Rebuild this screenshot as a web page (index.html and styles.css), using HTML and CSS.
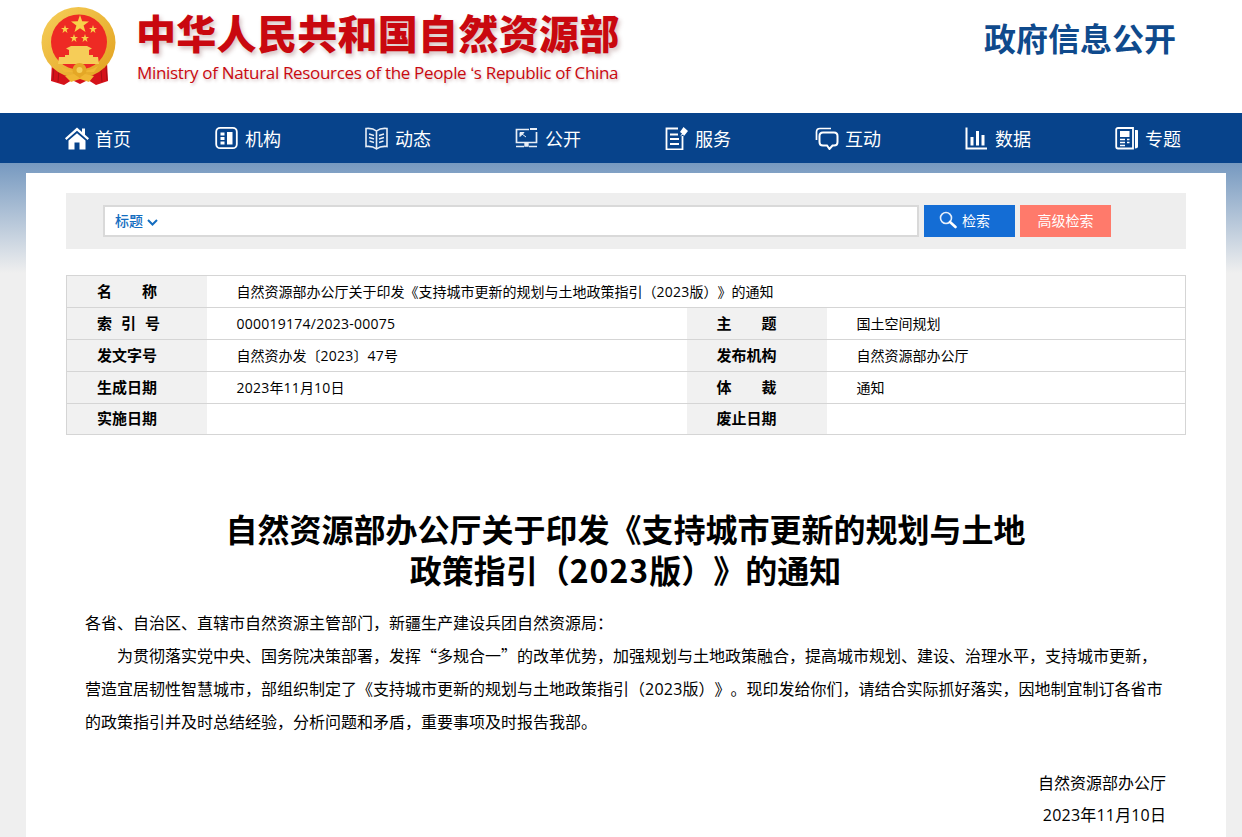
FILE: index.html
```html
<!DOCTYPE html>
<html lang="zh-CN">
<head>
<meta charset="UTF-8" />
<title>自然资源部办公厅关于印发《支持城市更新的规划与土地政策指引（2023版）》的通知</title>
<link rel="stylesheet" href="styles.css">
</head>
<body>
<header class="top">
  <div class="logo">
    <svg class="emblem" width="80" height="90" viewBox="0 0 80 90">
      <defs>
        <linearGradient id="gold" x1="0" y1="0" x2="1" y2="1">
          <stop offset="0" stop-color="#f6cf5a"/>
          <stop offset="1" stop-color="#e2a11e"/>
        </linearGradient>
      </defs>
      <path d="M12 58 L11 77 L24 81 L32 76 L40 80 L48 76 L56 81 L68 77 L67 58 Z" fill="#d5121a"/>
      <path d="M14 62 L13 76 M19 66 L18 78 M61 66 L62 78 M66 62 L67 76" stroke="#a80f14" stroke-width="1"/>
      <ellipse cx="38.5" cy="38.5" rx="37" ry="35.5" fill="url(#gold)"/>
      <ellipse cx="39" cy="38" rx="28" ry="27.5" fill="#ee2a24"/>
      <polygon points="40,11 42.2,17.3 49,17.5 43.6,21.6 45.5,28 40,24.3 34.5,28 36.4,21.6 31,17.5 37.8,17.3" fill="#f8d24a"/>
      <polygon points="25,21 26,24 29,24 26.6,25.8 27.5,29 25,27 22.5,29 23.4,25.8 21,24 24,24" fill="#f8d24a"/>
      <polygon points="53,21 54,24 57,24 54.6,25.8 55.5,29 53,27 50.5,29 51.4,25.8 49,24 52,24" fill="#f8d24a"/>
      <polygon points="34,30 35,33 38,33 35.6,34.8 36.5,38 34,36 31.5,38 32.4,34.8 30,33 33,33" fill="#f8d24a"/>
      <polygon points="45,30 46,33 49,33 46.6,34.8 47.5,38 45,36 42.5,38 43.4,34.8 41,33 44,33" fill="#f8d24a"/>
      <path d="M26 44.5 L31 42 L47 42 L52 44.5 L49 46 L49 51 L53 51 L53 53 L58 53 L59 60 L18 60 L19 53 L25 53 L25 51 L29 51 L29 46 Z" fill="#f6cd58"/>
      <path d="M20 62 C26 66 32 67 39 67 C46 67 52 66 58 62 L54 68 L24 68 Z" fill="#f0b734"/>
      <circle cx="39.5" cy="66" r="7" fill="#e4a726"/>
      <circle cx="39.5" cy="66" r="3" fill="#f6cf5a"/>
      <path d="M25 72 L34 70 L39.5 74 L45 70 L54 72 L49 78 L40 75 L31 78 Z" fill="#f0b734"/>
    </svg>
    <div class="logo-text">
      <div class="logo-cn">中华人民共和国自然资源部</div>
      <div class="logo-en">Ministry of Natural Resources of the People ʻs Republic of China</div>
    </div>
  </div>
  <div class="top-title">政府信息公开</div>
</header>

<nav class="nav">
  <a class="nav-item">
    <svg width="24" height="24" viewBox="0 0 24 24"><path d="M12 1.5 L17 6 V2.5 H20 V8.7 L24 12.3 L22.6 14 L12 4.8 L1.4 14 L0 12.3 Z" fill="#fff"/><path d="M3.5 14.5 L12 7.2 L20.5 14.5 V23.5 H14.5 V16.5 H9.5 V23.5 H3.5 Z" fill="#fff"/></svg>
    首页
  </a>
  <a class="nav-item">
    <svg width="24" height="24" viewBox="0 0 24 24"><rect x="1.2" y="1.8" width="20.6" height="20.4" rx="4" fill="none" stroke="#fff" stroke-width="1.8"/><path d="M5.5 6.5 H9.5 V9.5 H5.5 Z M5.5 11 H9.5 V14 H5.5 Z M5.5 15.5 H9.5 V18.5 H5.5 Z M12 6 H17.5 V18.5 H12 Z" fill="#fff"/></svg>
    机构
  </a>
  <a class="nav-item">
    <svg width="24" height="24" viewBox="0 0 24 24"><path d="M11.5 5 C9 3 5 2 1 2.5 V20.5 C5 20 9 21 11.5 23 C14 21 18 20 22 20.5 V2.5 C18 2 14 3 11.5 5 Z M11.5 5 V23" fill="none" stroke="#e8eef6" stroke-width="1.6"/><path d="M4 8 L9 9.5 M4 11.5 L9 13 M4.5 15 L9 16.5 M19 8 L14 9.5 M19 11.5 L14 13 M18.5 15 L14 16.5" stroke="#e8eef6" stroke-width="1.4"/></svg>
    动态
  </a>
  <a class="nav-item">
    <svg width="24" height="24" viewBox="0 0 24 24"><path d="M14 3.5 H1.5 V16.5 H21.5 V6" fill="none" stroke="#e8eef6" stroke-width="1.7"/><path d="M15 2 H22 V4 H15 Z" fill="#e8eef6"/><path d="M5 6.5 H9 L5 10.5 Z M7 8 L11 11" fill="#e8eef6" stroke="#e8eef6" stroke-width="1"/><path d="M10 17 H13 V20 H10 Z M1 20.5 H9 M14 20.5 H22" fill="#e8eef6" stroke="#e8eef6" stroke-width="1.4"/></svg>
    公开
  </a>
  <a class="nav-item">
    <svg width="24" height="24" viewBox="0 0 24 24"><path d="M13 2.5 H1.5 V23.5 H17.5 V10" fill="none" stroke="#fff" stroke-width="1.8"/><path d="M5 8.5 H13 M5 13 H14 M5 18 H14" stroke="#fff" stroke-width="1.8"/><path d="M18.5 1 L23 5 L19 10 L18 8.5 L15 10.5 L17 7.5 L15 6 Z" fill="#fff"/></svg>
    服务
  </a>
  <a class="nav-item">
    <svg width="24" height="24" viewBox="0 0 24 24"><path d="M1.5 14 V6 C1.5 4 3 2.5 5 2.5 H16" fill="none" stroke="#fff" stroke-width="1.7"/><path d="M8 6.5 H19 C21 6.5 22.5 8 22.5 10 V16 C22.5 18 21 19.5 19 19.5 H17.5 L14.5 23 L12 19.5 H8 C6 19.5 4.5 18 4.5 16 V10 C4.5 8 6 6.5 8 6.5 Z" fill="none" stroke="#fff" stroke-width="2"/></svg>
    互动
  </a>
  <a class="nav-item">
    <svg width="24" height="24" viewBox="0 0 24 24"><path d="M1.5 1.5 V22.5 H22" fill="none" stroke="#fff" stroke-width="2"/><path d="M5.5 11 H8.5 V19.5 H5.5 Z M11 5 H14 V19.5 H11 Z M16.5 9 H19.5 V19.5 H16.5 Z" fill="#fff"/></svg>
    数据
  </a>
  <a class="nav-item">
    <svg width="24" height="24" viewBox="0 0 24 24"><path d="M3 2 H18 V22.5 H3 C1.8 22.5 1.2 21.8 1.2 20.5 V3.5 C1.2 2.6 1.9 2 3 2 Z" fill="none" stroke="#fff" stroke-width="1.8"/><path d="M20 4 H22 C22.6 4 23 4.4 23 5 V20.5 C23 21.8 22 22.5 20 22.5 Z" fill="#fff"/><path d="M5 5 H14.5 V11 H5 Z" fill="#fff"/><path d="M5 13.5 H10 M12 13.5 H14.5 M5 16.5 H10 M12 16.5 H14.5 M5 19.5 H10" stroke="#fff" stroke-width="1.5"/></svg>
    专题
  </a>
</nav>

<main class="page">
  <form class="search">
    <div class="search-input">
      <span class="search-type">标题 <svg width="11" height="7" viewBox="0 0 11 7"><path d="M1 1 L5.5 5.5 L10 1" fill="none" stroke="#146dc0" stroke-width="2"/></svg></span>
    </div>
    <button type="button" class="btn btn-search">
      <svg width="18" height="18" viewBox="0 0 18 18"><circle cx="7" cy="7" r="5.5" fill="none" stroke="#e6effa" stroke-width="1.6"/><path d="M11 11 L16.5 16" stroke="#fff" stroke-width="2.6" stroke-linecap="round"/></svg>
      检索
    </button>
    <button type="button" class="btn btn-adv">高级检索</button>
  </form>

  <table class="info">
    <colgroup>
      <col class="col-label"><col class="col-value"><col class="col-label"><col>
    </colgroup>
    <tr>
      <th>名　　称</th>
      <td colspan="3">自然资源部办公厅关于印发《支持城市更新的规划与土地政策指引（<span class="num">2023</span>版）》的通知</td>
    </tr>
    <tr>
      <th>索 引 号</th>
      <td><span class="num">000019174/2023-00075</span></td>
      <th>主　　题</th>
      <td>国土空间规划</td>
    </tr>
    <tr>
      <th>发文字号</th>
      <td>自然资办发〔<span class="num">2023</span>〕<span class="num">47</span>号</td>
      <th>发布机构</th>
      <td>自然资源部办公厅</td>
    </tr>
    <tr>
      <th>生成日期</th>
      <td><span class="num">2023</span>年<span class="num">11</span>月<span class="num">10</span>日</td>
      <th>体　　裁</th>
      <td>通知</td>
    </tr>
    <tr class="last">
      <th>实施日期</th>
      <td></td>
      <th>废止日期</th>
      <td></td>
    </tr>
  </table>

  <article class="article">
    <h1>自然资源部办公厅关于印发《支持城市更新的规划与土地政策指引（<span class="num">2023</span>版）》的通知</h1>
    <p>各省、自治区、直辖市自然资源主管部门，新疆生产建设兵团自然资源局：</p>
    <p class="indent">为贯彻落实党中央、国务院决策部署，发挥“多规合一”的改革优势，加强规划与土地政策融合，提高城市规划、建设、治理水平，支持城市更新，营造宜居韧性智慧城市，部组织制定了《支持城市更新的规划与土地政策指引（<span class="num">2023</span>版）》。现印发给你们，请结合实际抓好落实，因地制宜制订各省市的政策指引并及时总结经验，分析问题和矛盾，重要事项及时报告我部。</p>
    <p class="sign">自然资源部办公厅</p>
    <p class="date"><span class="num">2023</span>年<span class="num">11</span>月<span class="num">10</span>日</p>
  </article>
</main>
</body>
</html>
```

FILE: styles.css
```css
* {
  box-sizing: border-box;
}
body {
  margin: 0;
  height: 837px;
  overflow: hidden;
  font-family: "Noto Sans CJK SC", "Liberation Sans", sans-serif;
  text-spacing-trim: space-all;
  color: #000;
  background: #efefef linear-gradient(#7699c0 0, #efefef 110px) no-repeat 0 163px;
}

/* 头部 */
.top {
  height: 113px;
  background: #fff;
  display: flex;
  justify-content: space-between;
  padding: 0 66px 0 40px;
}
.logo {
  display: flex;
  padding-top: 4px;
}
.emblem {
  display: block;
}
.logo-text {
  margin-left: 16px;
}
.logo-cn {
  margin-top: 2px;
  font-size: 40px;
  line-height: 52px;
  font-weight: 900;
  letter-spacing: 0.3px;
  color: #c9080f;
  white-space: nowrap;
  text-shadow: 2px 3px 4px rgba(120, 60, 60, 0.3);
}
.logo-en {
  margin-top: 3px;
  margin-left: 1px;
  font-family: "Open Sans", sans-serif;
  font-size: 17px;
  line-height: 24px;
  letter-spacing: -0.33px;
  color: #c9080f;
  white-space: nowrap;
  text-shadow: 1px 2px 3px rgba(120, 60, 60, 0.3);
}
.top-title {
  margin-top: 14px;
  font-size: 32px;
  line-height: 46px;
  font-weight: 700;
  color: #0f4a8c;
}

/* 导航 */
.nav {
  height: 50px;
  background: #07438b;
  display: flex;
  overflow: hidden;
  padding-left: 65px;
}
.nav-item {
  flex: none;
  width: 150px;
  display: flex;
  align-items: center;
  gap: 6px;
  color: #fff;
  font-size: 18px;
}

/* 内容 */
.page {
  width: 1200px;
  min-height: 664px;
  margin: 10px 0 0 26px;
  padding: 20px 40px 0;
  background: #fff;
}
.search {
  height: 56px;
  background: #eee;
  display: flex;
  padding: 12px 75px 0 37px;
  gap: 5px;
}
.search-input {
  flex: 1;
  height: 32px;
  background: #fff;
  border: 2px solid #d9d9d9;
  padding-left: 10px;
  line-height: 27px;
  font-size: 14px;
  font-weight: 500;
  color: #146dc0;
}
.search-type svg {
  margin-left: 1px;
}
.btn {
  width: 91px;
  height: 32px;
  border: none;
  padding: 0 0 2px;
  color: #fff;
  font-family: inherit;
  font-size: 14px;
  display: flex;
  align-items: center;
  justify-content: center;
  gap: 5px;
}
.btn-search {
  justify-content: flex-start;
  padding-left: 15px;
  background: #146dd5;
}
.btn-adv {
  background: #ff7a6b;
}

.info {
  width: 1120px;
  margin-top: 26px;
  border-collapse: collapse;
  table-layout: fixed;
  font-size: 14px;
}
.col-label {
  width: 140px;
}
.col-value {
  width: 480px;
}
.info th,
.info td {
  height: 32px;
  padding: 0 0 1px 30px;
  border-top: 1px solid #d5d5d5;
  border-bottom: 1px solid #d5d5d5;
  font-weight: 400;
  text-align: left;
}
.info .last th,
.info .last td {
  height: 31px;
}
.info th {
  padding-bottom: 3px;
  background: #f1f1f1;
  font-size: 15px;
  font-weight: 700;
  word-spacing: 5.6px;
}
.info tr > :first-child {
  border-left: 1px solid #d5d5d5;
}
.info tr > :last-child {
  border-right: 1px solid #d5d5d5;
}
.num {
  font-family: "Open Sans", sans-serif;
  line-height: 1;
  letter-spacing: 0.25px;
}

/* 正文 */
.article {
  padding: 73px 20px 0 19px;
  font-size: 16px;
}
.article h1 {
  width: 800px;
  margin: 0 auto 16px;
  font-size: 32px;
  line-height: 41px;
  font-weight: 700;
  text-align: center;
}
.article p {
  margin: 0;
  line-height: 33px;
}
.article h1 .num {
  font-family: inherit;
  letter-spacing: 1px;
}
.article .indent {
  text-indent: 2em;
}
.article .sign {
  margin-top: 28px;
  text-align: right;
}
.article .date {
  text-align: right;
  line-height: 31px;
}
```
